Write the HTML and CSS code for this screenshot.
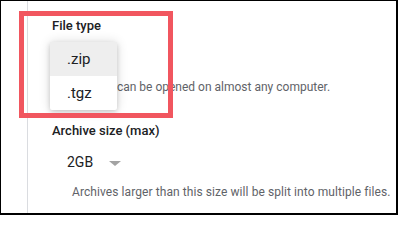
FILE: index.html
```html
<!DOCTYPE html>
<html lang="en">
<head>
<meta charset="utf-8">
<title>Archive settings</title>
<link rel="stylesheet" href="styles.css">
</head>
<body>
<div class="frame">
  <div class="panel">
    <section class="field">
      <h2 class="field-title">File type</h2>
      <div class="select-row is-open">
        <ul class="menu">
          <li class="menu-item is-active">.zip</li>
          <li class="menu-item">.tgz</li>
        </ul>
      </div>
      <p class="field-help">Zip files can be opened on almost any computer.</p>
    </section>
    <section class="field">
      <h2 class="field-title">Archive size (max)</h2>
      <div class="select-row">
        <span class="select-value">2GB</span>
        <span class="caret"></span>
      </div>
      <p class="field-help field-help-wide">Archives larger than this size will be split into multiple files.</p>
    </section>
  </div>
  <div class="highlight"></div>
</div>
</body>
</html>
```
FILE: styles.css
```css
* { box-sizing: border-box; }
html, body { margin: 0; padding: 0; background: #fff; }
body {
  font-family: Roboto, "Liberation Sans", Arial, sans-serif;
  color: #202124;
}
.frame {
  position: relative;
  width: 398px;
  height: 215px;
  border-style: solid;
  border-color: #000;
  border-width: 1px 2px 2px 1px;
  overflow: hidden;
  background: #fff;
}
.panel {
  margin-left: 26px;
  height: 100%;
  border-left: 1px solid #dadce0;
  padding: 16.5px 0 0 24px;
  display: flex;
  flex-direction: column;
  gap: 28px;
}
.field {
  display: flex;
  flex-direction: column;
}
.field-title {
  margin: 0;
  font-size: 13px;
  line-height: 16px;
  font-weight: 500;
  color: #202124;
}
.select-row {
  position: relative;
  display: flex;
  align-items: flex-start;
  margin: 13px 0 12px;
  padding-left: 15px;
  height: 20px;
  font-size: 14px;
  line-height: 20px;
}
.select-value {
  width: 42px;
}
.caret {
  margin-top: 9.5px;
  width: 0;
  height: 0;
  border-left: 6px solid transparent;
  border-right: 6px solid transparent;
  border-top: 5px solid #a3a3a3;
}
.field-help {
  margin: 0 0 0 20px;
  font-size: 12px;
  line-height: 16px;
  color: #5f6368;
  white-space: nowrap;
}
.field-help-wide {
  letter-spacing: 0.08px;
}
.menu {
  position: absolute;
  top: -4.5px;
  left: -2px;
  width: 67px;
  margin: 0;
  padding: 0;
  list-style: none;
  background: #fff;
  border-radius: 2px;
  box-shadow: 0 2px 5px rgba(0,0,0,.16), 0 0 12px rgba(0,0,0,.14);
  z-index: 2;
}
.menu-item {
  height: 34px;
  padding-left: 17px;
  font-size: 15px;
  line-height: 34px;
  color: #202124;
}
.menu-item.is-active {
  background: #eeeeee;
}
.highlight {
  position: absolute;
  left: 18px;
  top: 10px;
  width: 154px;
  height: 107px;
  border: 5px solid #f1565f;
  z-index: 3;
  pointer-events: none;
}
```
